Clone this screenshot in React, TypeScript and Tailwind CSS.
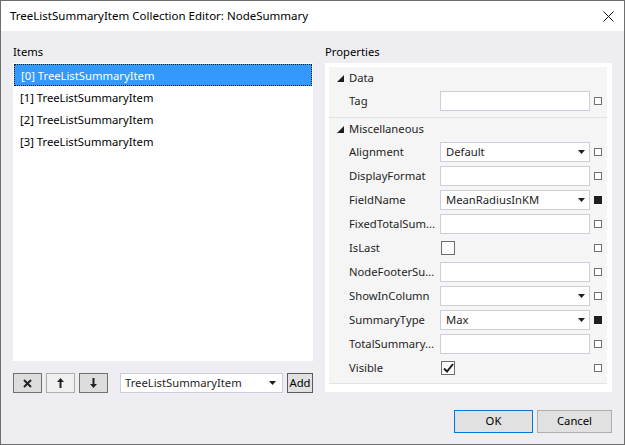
import React from "react";

const font = { fontFamily: '"Segoe UI", "Noto Sans", "Open Sans", sans-serif' };

const Arrow = () => (
  <svg width="7" height="4" viewBox="0 0 7 4" className="shrink-0">
    <path d="M0 0 H7 L3.5 4 Z" fill="#1e1e1e" />
  </svg>
);

const Expander = () => (
  <svg width="7" height="7" viewBox="0 0 7 7" className="shrink-0">
    <path d="M7 0 V7 H0 Z" fill="#1e1e1e" />
  </svg>
);

const Marker = ({ set }: { set?: boolean }) => (
  <div
    className={`ml-[4px] w-[8px] h-[8px] border shrink-0 ${
      set ? "bg-[#1e1e1e] border-[#1e1e1e]" : "border-[#717171] bg-white"
    }`}
  />
);

type Prop = {
  name: string;
  kind: "text" | "combo" | "check";
  value?: string;
  checked?: boolean;
  set?: boolean;
};

const dataProps: Prop[] = [{ name: "Tag", kind: "text" }];

const miscProps: Prop[] = [
  { name: "Alignment", kind: "combo", value: "Default" },
  { name: "DisplayFormat", kind: "text" },
  { name: "FieldName", kind: "combo", value: "MeanRadiusInKM", set: true },
  { name: "FixedTotalSum...", kind: "text" },
  { name: "IsLast", kind: "check" },
  { name: "NodeFooterSu...", kind: "text" },
  { name: "ShowInColumn", kind: "combo" },
  { name: "SummaryType", kind: "combo", value: "Max", set: true },
  { name: "TotalSummary...", kind: "text" },
  { name: "Visible", kind: "check", checked: true },
];

const PropRow = ({ p }: { p: Prop }) => (
  <div className="flex items-center h-[24px]">
    <div className="w-[111px] pl-[20px] pt-[1px] text-[#1e1e1e] whitespace-nowrap overflow-hidden">{p.name}</div>
    <div className="w-[150px] h-[20px] flex items-center">
      {p.kind === "check" ? (
        <div className="ml-[1px] w-[14px] h-[14px] border border-[#6d6d6d] bg-white flex items-center justify-center">
          {p.checked && (
            <svg width="11" height="10" viewBox="0 0 11 10">
              <path d="M1 5.5 L4 8.5 L10 1" stroke="#1e1e1e" strokeWidth="2" fill="none" />
            </svg>
          )}
        </div>
      ) : (
        <div className="w-full h-full bg-white border border-[#cccedb] flex items-center pl-[5px] pr-[4px]">
          <span className="flex-1 pt-[1px] text-[#1e1e1e] whitespace-nowrap">{p.value ?? ""}</span>
          {p.kind === "combo" && <Arrow />}
        </div>
      )}
    </div>
    <Marker set={p.set} />
  </div>
);

const Category = ({ title }: { title: string }) => (
  <div className="flex items-center h-[22px] pl-[8px] gap-[5px] text-[#1e1e1e]">
    <Expander />
    <span className="pt-[1px]">{title}</span>
  </div>
);

const ToolButton = ({ children, disabled }: { children: React.ReactNode; disabled?: boolean }) => (
  <div
    className={`w-[29px] h-[20px] border flex items-center justify-center ${
      disabled ? "bg-[#f0f0f0] border-[#adadad]" : "bg-[#dddddd] border-[#707070]"
    }`}
  >
    {children}
  </div>
);

export default function App() {
  const items = [0, 1, 2, 3];
  return (
    <div style={font} className="w-[625px] h-[445px] border border-[#6e6e6e] bg-[#eeeef2] text-[11.25px] text-black flex flex-col">
      <div className="h-[30px] bg-white flex items-center pl-[9px] pr-[10px] shrink-0">
        <span className="flex-1 text-[11.5px]">TreeListSummaryItem Collection Editor: NodeSummary</span>
        <svg width="11" height="11" viewBox="0 0 11 11">
          <path d="M0.5 0.5 L10.5 10.5 M10.5 0.5 L0.5 10.5" stroke="#111" strokeWidth="1" />
        </svg>
      </div>

      <div className="flex pl-[12px] pt-[12px] gap-[12px]">
        <div className="w-[300px] flex flex-col">
          <div className="h-[16px] leading-[16px] mb-[4px] pt-[1px]">Items</div>
          <div className="h-[298px] bg-white p-[1px]">
            {items.map((i) => (
              <div
                key={i}
                className={`h-[22px] flex items-center pl-[6px] pt-[2px] ${
                  i === 0 ? "bg-[#3399ff] text-white border border-dotted border-[#1a1a1a]" : ""
                }`}
              >
                [{i}] TreeListSummaryItem
              </div>
            ))}
          </div>
          <div className="mt-[12px] flex items-center h-[20px]">
            <ToolButton>
              <svg width="9" height="9" viewBox="0 0 9 9">
                <path d="M1 1 L8 8 M8 1 L1 8" stroke="#222" strokeWidth="2" />
              </svg>
            </ToolButton>
            <div className="w-[4px]" />
            <ToolButton disabled>
              <svg width="7" height="10" viewBox="0 0 7 10">
                <path d="M3.5 0 L7 4 H4.5 V10 H2.5 V4 H0 Z" fill="#222" />
              </svg>
            </ToolButton>
            <div className="w-[4px]" />
            <ToolButton>
              <svg width="7" height="10" viewBox="0 0 7 10">
                <path d="M3.5 10 L7 6 H4.5 V0 H2.5 V6 H0 Z" fill="#222" />
              </svg>
            </ToolButton>
            <div className="ml-[12px] w-[163px] h-[20px] bg-white border border-[#cccedb] flex items-center pl-[4px] pr-[6px]">
              <span className="flex-1 pt-[1px] text-[#1e1e1e]">TreeListSummaryItem</span>
              <Arrow />
            </div>
            <div className="ml-[4px] w-[26px] h-[20px] bg-[#e1e1e1] border border-[#5a5a5a] flex items-center justify-center">
              Add
            </div>
          </div>
        </div>

        <div className="w-[287px] flex flex-col">
          <div className="h-[16px] leading-[16px] mb-[4px] pt-[1px]">Properties</div>
          <div className="h-[329px] bg-white pt-[4px] pl-[4px] pr-[5px]">
            <div className="bg-[#f5f5f5] pb-[3px] border-b border-[#e2e2e2]">
              <Category title="Data" />
              {dataProps.map((p) => (
                <PropRow key={p.name} p={p} />
              ))}
              <div className="mt-[4px] border-t border-[#e2e2e2]" />
              <Category title="Miscellaneous" />
              {miscProps.map((p) => (
                <PropRow key={p.name} p={p} />
              ))}
            </div>
          </div>
        </div>
      </div>

      <div className="mt-[17px] flex justify-end pr-[12px] gap-[4px]">
        <div className="w-[79px] h-[23px] bg-[#e1e1e1] border border-[#0078d7] flex items-center justify-center">OK</div>
        <div className="w-[75px] h-[23px] bg-[#e1e1e1] border border-[#adadad] flex items-center justify-center">Cancel</div>
      </div>
    </div>
  );
}
